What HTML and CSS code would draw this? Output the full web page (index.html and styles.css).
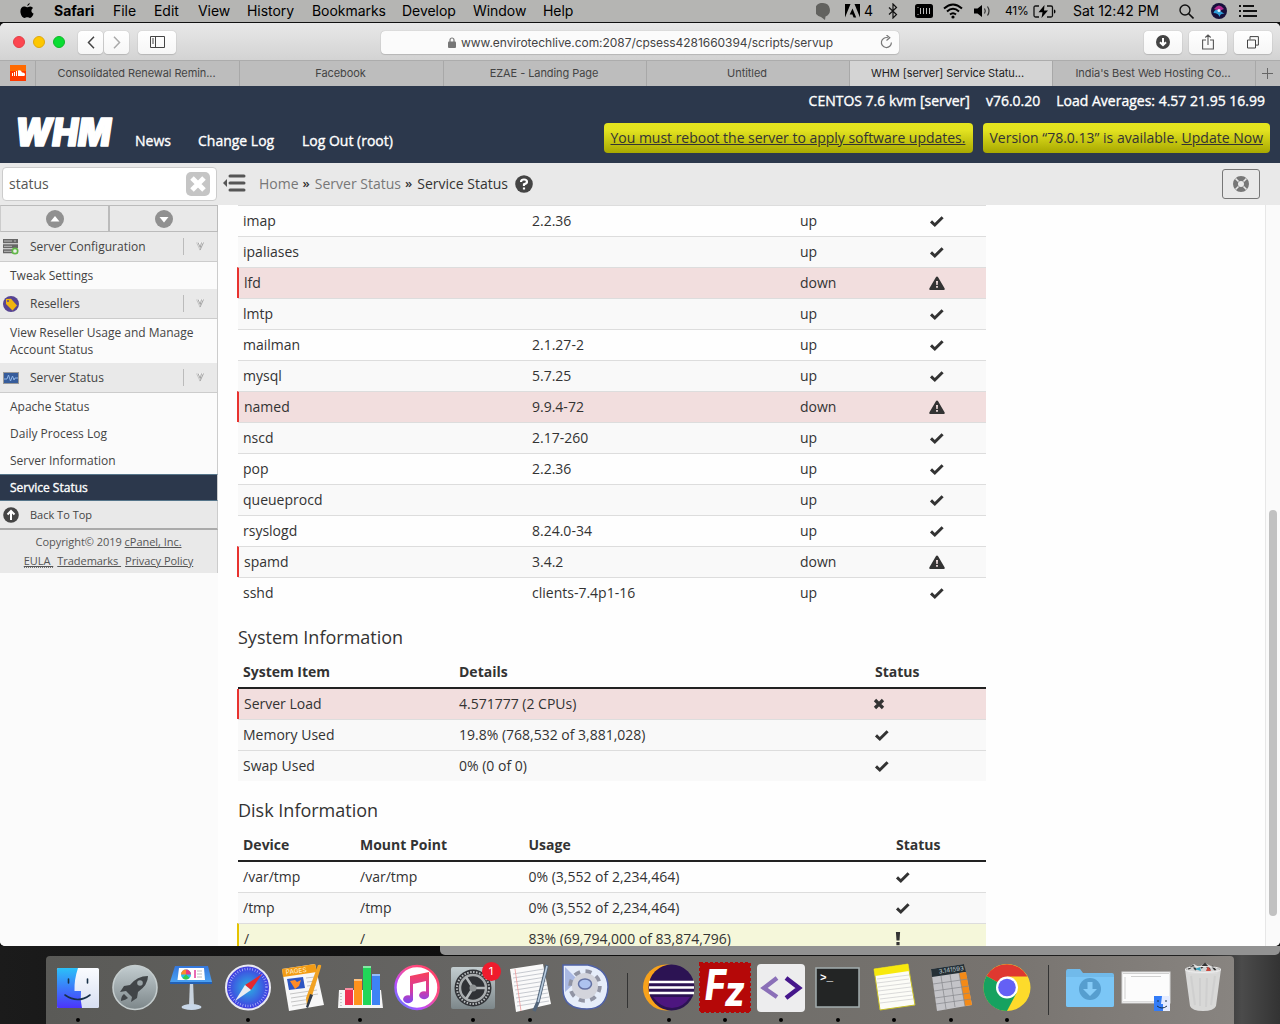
FILE: index.html
```html
<!DOCTYPE html>
<html lang="en">
<head>
<meta charset="utf-8">
<title>WHM [server] Service Status</title>
<link rel="stylesheet" href="styles.css">
</head>
<body>
<svg class="defs" width="0" height="0" aria-hidden="true">
  <symbol id="check" viewBox="0 0 16 14"><path d="M2 7.4 5.8 11 13.6 3.2" fill="none" stroke="#333" stroke-width="3"/></symbol>
  <symbol id="warn" viewBox="0 0 16 14"><path d="M8 .5Q8.7.5 9.100 1.200L15.700 12.500Q16 14 14.800 14H1.200Q0 14 .3 12.500L6.900 1.200Q7.300.5 8 .5Z" fill="#333"/><path d="M7 5h2l-.3 4H7.300ZM7.100 10h1.800v1.800H7.100Z" fill="#f2dede"/></symbol>
  <symbol id="cross" viewBox="0 0 16 14"><path d="M2 3 10 11M10 3 2 11" fill="none" stroke="#333" stroke-width="3.300"/></symbol>
  <symbol id="bang" viewBox="0 0 16 14"><path d="M.9 0h4.200l-.6 8.500h-3ZM1.400 10h3.200v3.200H1.400Z" fill="#333"/></symbol>
  <symbol id="chev" viewBox="0 0 8 9"><path d="M0 .5H8L4 9Z" fill="#f6f6f6"/><path d="M.5.5 4 8" fill="none" stroke="#c4c4c4"/><path d="M2 .5 4.200 5.500 5.500.5M4 8.200 7.500.5" fill="none" stroke="#a2a2a2"/></symbol>
  <linearGradient id="gray" x2="0" y2="1"><stop stop-color="#c3cdd0"/><stop offset="1" stop-color="#7d878a"/></linearGradient>
  <linearGradient id="blue" x2="0" y2="1"><stop stop-color="#2bc1f8"/><stop offset="1" stop-color="#4c34fb"/></linearGradient>
  <linearGradient id="pale" x2="0" y2="1"><stop stop-color="#fafcff"/><stop offset="1" stop-color="#d8dff2"/></linearGradient>
  <linearGradient id="kn" x2="0" y2="1"><stop stop-color="#3577dc"/><stop offset="1" stop-color="#4da6f5"/></linearGradient>
  <radialGradient id="compass"><stop stop-color="#2ab4e2"/><stop offset="1" stop-color="#4337e0"/></radialGradient>
  <linearGradient id="ring" x1="1" y1="0" x2="0" y2="1"><stop stop-color="#ff3b5c"/><stop offset=".4" stop-color="#ff4d8c"/><stop offset=".7" stop-color="#b64bff"/><stop offset="1" stop-color="#4a8bff"/></linearGradient>
  <linearGradient id="note" x2="0" y2="1"><stop stop-color="#fa4158"/><stop offset=".6" stop-color="#d33ba5"/><stop offset="1" stop-color="#7b48f7"/></linearGradient>
</svg>

<header class="menubar">
  <div class="menus">
    <span class="apple"><svg width="14" height="17" viewBox="0 0 14 17"><path d="M9.800.8Q9.900 3 7.200 4.300 7.200 1.800 9.800.8M7 5.200c1 0 1.800-.9 3.300-.8 1.300.1 2.200.7 2.700 1.500-2.300 1.600-2 4.700.6 5.700-.8 2.300-2 4.300-3.600 4.300-1 0-1.500-.6-2.700-.6s-1.800.6-2.700.6C2.300 15.900.4 12.300.4 9.200c0-3 1.800-4.700 3.700-4.700 1.200 0 2.100.7 2.900.7Z" fill="#000"/></svg></span>
    <b>Safari</b><span>File</span><span>Edit</span><span>View</span><span>History</span><span>Bookmarks</span><span>Develop</span><span>Window</span><span>Help</span>
  </div>
  <div class="tray">
    <svg class="t-bubble" width="14" height="17" viewBox="0 0 14 17"><path d="M7 0a7 7 0 0 1 2.500 13.500L9 17 5 14A7 7 0 0 1 7 0Z" fill="#62625f"/></svg>
    <svg class="t-adobe" width="15" height="14" viewBox="0 0 15 14"><path d="M0 0h5.500L0 13.500ZM9.500 0H15v13.500ZM7.500 4.500 11.200 13.500H8.600L7.400 10.500H4.700Z"/></svg><span class="t-four">4</span>
    <svg class="t-bt" width="10" height="16" viewBox="0 0 10 16"><path d="M1 4.500 8.500 11.500 5 15V1l3.500 3.500L1 11.500" fill="none" stroke="#111" stroke-width="1.200"/></svg>
    <svg class="t-mem" width="18" height="14" viewBox="0 0 18 14"><rect width="18" height="14" rx="2.500"/><path d="M2.500 3.500h1M2.500 10.500h1M5.500 4v6M8.500 4v6M11.500 4v6M14.500 4v6" fill="none" stroke="#bbb"/></svg>
    <svg class="t-wifi" width="20" height="16" viewBox="0 0 20 16"><path d="M1 5.500Q10-2.500 19 5.500M4 8.500Q10 3 16 8.500M7 11.500Q10 9 13 11.500" fill="none" stroke="#000" stroke-width="2"/><circle cx="10" cy="14" r="1.600"/></svg>
    <svg class="t-vol" width="18" height="14" viewBox="0 0 18 14"><path d="M0 4.500h3.500L8 1v12L3.500 9.500H0Z"/><path d="M10.500 4.500q1.600 2.500 0 5M13.500 2.500q3 4.500 0 9" fill="none" stroke="#333" stroke-width="1.200"/></svg>
    <span class="t-pct">41%</span>
    <svg class="t-bat" width="23" height="13" viewBox="0 0 23 13"><path d="M6 1H2.500Q1 1 1 2.500V10.500Q1 12 2.500 12H6M14 1h4q1.500 0 1.500 1.500v8Q19.500 12 18 12H14" fill="none" stroke="#111" stroke-width="1.300"/><path d="M21 4.500q1.500 0 1.500 2t-1.500 2ZM11.500 0 5.500 7.300H9.500L8.500 13 15 5.500H11Z"/></svg>
    <span class="t-clock">Sat 12:42 PM</span>
    <svg class="t-find" width="15" height="15" viewBox="0 0 15 15"><circle cx="6" cy="6" r="5" fill="none" stroke="#111" stroke-width="1.400"/><path d="m9.500 9.500 5 5" stroke="#111" stroke-width="1.600"/></svg>
    <svg class="t-siri" width="16" height="16" viewBox="0 0 16 16"><circle cx="8" cy="8" r="8" fill="#17103c"/><path d="M3 6Q8-1 13 6L8 8Z" fill="#b02a8e"/><path d="M2.500 10q1-4 5.500-3l5.500 4q-4-1-5 3-1-4-6-4Z" fill="#2f9ed8"/><circle cx="8" cy="7.500" r="1.500" fill="#e8f4ff"/></svg>
    <svg class="t-list" width="18" height="12" viewBox="0 0 18 12"><path d="M0 1h2M0 6h2M0 11h2M4 1h11M4 6h14M4 11h14" stroke="#111" stroke-width="2"/></svg>
  </div>
</header>

<div class="window">
  <div class="toolbar">
    <div class="lights"><i class="red"></i><i class="yellow"></i><i class="green"></i></div>
    <div class="nav">
      <span class="btn small"><svg width="8" height="13" viewBox="0 0 8 13"><path d="M7 .8 1.500 6.500 7 12.200" fill="none" stroke="#444" stroke-width="1.500"/></svg></span>
      <span class="btn small"><svg width="8" height="13" viewBox="0 0 8 13"><path d="M1 .8 6.500 6.500 1 12.200" fill="none" stroke="#aaa" stroke-width="1.500"/></svg></span>
    </div>
    <span class="btn side"><svg width="15" height="12" viewBox="0 0 15 12"><path d="M.5.5h14v11H.5ZM5.500.5v11M2 3h2M2 5h2M2 7h2" fill="none" stroke="#444"/></svg></span>
    <div class="url"><svg width="8" height="11" viewBox="0 0 8 11"><path d="M2 5V3a2 2 0 0 1 4 0v2" fill="none" stroke="#777" stroke-width="1.200"/><rect y="4.500" width="8" height="6.500" rx="1" fill="#777"/></svg><span>www.envirotechlive.com:2087/cpsess4281660394/scripts/servup</span>
      <svg class="reload" width="13" height="14" viewBox="0 0 13 14"><path d="M8 2.800A5 5 0 1 0 11.400 7.500" fill="none" stroke="#777" stroke-width="1.200"/><path d="M6.500 0 9.800 2.800 6.500 5.500" fill="none" stroke="#777" stroke-width="1.200"/></svg></div>
    <div class="actions">
      <span class="btn"><svg width="14" height="14" viewBox="0 0 14 14"><circle cx="7" cy="7" r="7" fill="#444"/><path d="M7 3v7M4 7.200l3 3 3-3" fill="none" stroke="#fff" stroke-width="2"/></svg></span>
      <span class="btn"><svg width="12" height="16" viewBox="0 0 12 16"><path d="M4 6H.6v9h10.800V6H8M6 11V1M3.300 3.500 6 .9l2.700 2.600" fill="none" stroke="#555" stroke-width="1.100"/></svg></span>
      <span class="btn"><svg width="12" height="13" viewBox="0 0 12 13"><path d="M.5 4h8v8h-8ZM3 3.500V.6h8.400v8.500H9" fill="none" stroke="#444"/></svg></span>
    </div>
  </div>
  <div class="tabs">
    <span class="pin"><svg width="16" height="16" viewBox="0 0 16 16"><rect width="16" height="16" fill="#ff3a00"/><rect width="16" height="6" fill="#ff6a00"/><path d="M2.500 8v3M4.500 7v4M6.500 6v5" stroke="#fff"/><path d="M8 5.500q3-1 4 2 3-.3 3 2 0 1.500-1.500 1.500H8Z" fill="#fff"/></svg></span>
    <span>Consolidated Renewal Remin...</span><span>Facebook</span><span>EZAE - Landing Page</span><span>Untitled</span><span class="active">WHM [server] Service Statu...</span><span>India's Best Web Hosting Co...</span>
    <span class="plus"><svg width="11" height="11" viewBox="0 0 11 11"><path d="M5.500 0v11M0 5.500h11" stroke="#666"/></svg></span>
  </div>

  <div class="whm">
    <svg class="logo" width="108" height="56" viewBox="0 0 108 56"><text x="2" y="42" textLength="96" lengthAdjust="spacingAndGlyphs">WHM</text></svg>
    <nav><a class="n1">News</a><a class="n2">Change Log</a><a>Log Out (root)</a></nav>
    <div class="info">
      <div class="stats"><span class="os">CENTOS 7.6 kvm [server]</span><span class="ver">v76.0.20</span><span>Load Averages: 4.57 21.95 16.99</span></div>
      <div class="notices"><span class="notice n-boot"><u>You must reboot the server to apply software updates.</u></span><span class="notice">Version “78.0.13” is available. <u>Update Now</u></span></div>
    </div>
  </div>

  <div class="subbar">
    <div class="search"><span>status</span><svg width="24" height="24" viewBox="0 0 24 24"><rect width="24" height="24" rx="5" fill="#c5c5c5"/><path d="m6 6 12 12M18 6 6 18" stroke="#fff" stroke-width="5"/></svg></div>
    <svg class="collapse" width="23" height="18" viewBox="0 0 23 18"><path d="M0 9 4 5v8Z" fill="#555"/><path d="M7 2h14M7 9h14M7 16h14" stroke="#555" stroke-width="3" stroke-linecap="round"/></svg>
    <div class="crumbs"><span>Home</span><b>»</b><span>Server Status</span><b>»</b><span class="here">Service Status</span><svg width="18" height="18" viewBox="0 0 18 18"><circle cx="9" cy="9" r="8.800" fill="#444"/><path d="M6 7Q6 4.500 9 4.500T12 7Q12 8.300 9 9.300V11M9 12.500v2" fill="none" stroke="#fff" stroke-width="2.200"/></svg></div>
    <span class="support"><svg width="16" height="16" viewBox="0 0 16 16"><circle cx="8" cy="8" r="5.500" fill="none" stroke="#777" stroke-width="5"/><path d="m2.500 2.500 3 3M13.500 2.500l-3 3M2.500 13.500l3-3M13.500 13.500l-3-3" stroke="#e9e9e9" stroke-width="1.500"/></svg></span>
  </div>

  <div class="page">
    <aside>
      <div class="jump"><span><svg width="18" height="18" viewBox="0 0 18 18"><circle cx="9" cy="9" r="9" fill="#909090"/><path d="M4.500 11.500 9 6l4.500 5.500Z" fill="#fff"/></svg></span><span><svg width="18" height="18" viewBox="0 0 18 18"><circle cx="9" cy="9" r="9" fill="#909090"/><path d="M4.500 7 9 12.500 13.500 7Z" fill="#fff"/></svg></span></div>
      <div class="group"><svg width="16" height="16" viewBox="0 0 16 16"><path d="M0 0h15v4.300H0ZM0 5.300h15v4H0ZM0 10.300h15v4H0Z" fill="#666"/><path d="M1 2h8M1 7.300h8M1 12.300h8M11 2h2" stroke="#bbb"/><circle cx="12" cy="12" r="2.700" fill="#eee" stroke="#62b848" stroke-width="1.700"/></svg><span>Server Configuration</span><i></i><svg class="chev" width="8" height="9"><use href="#chev"/></svg></div>
      <div class="item">Tweak Settings</div>
      <div class="group"><svg width="16" height="16" viewBox="0 0 16 16"><circle cx="8" cy="8" r="8" fill="#574492"/><path d="m3 3 5-.3 6 6.800-4.500 5L3 8Z" fill="#f1b40f"/><circle cx="5" cy="5" r="1" fill="#574492"/></svg><span>Resellers</span><i></i><svg class="chev" width="8" height="9"><use href="#chev"/></svg></div>
      <div class="item two">View Reseller Usage and Manage<br>Account Status</div>
      <div class="group"><svg width="16" height="16" viewBox="0 0 16 16"><rect x=".5" y="2.500" width="15" height="11" fill="#365c9b" stroke="#999"/><path d="M1 9h3l1.500-4 2 6 2-5 1.500 4 1-2h3" fill="none" stroke="#8fb6e8"/></svg><span>Server Status</span><i></i><svg class="chev" width="8" height="9"><use href="#chev"/></svg></div>
      <div class="item">Apache Status</div><div class="item">Daily Process Log</div><div class="item">Server Information</div><div class="item current">Service Status</div>
      <div class="top"><svg width="16" height="16" viewBox="0 0 16 16"><circle cx="8" cy="8" r="7.800" fill="#444"/><path d="M8 13V5M4.500 7.500 8 4l3.500 3.500" fill="none" stroke="#fff" stroke-width="2"/></svg><span>Back To Top</span></div>
      <footer><div>Copyright© 2019 <u>cPanel, Inc.</u></div><div class="legal"><u class="eula">EULA&nbsp;</u><u>Trademarks&nbsp;</u><u>Privacy Policy</u></div></footer>
    </aside>
    <main>
      <div class="rows services">
        <div><span>imap</span><span>2.2.36</span><span>up</span><svg><use href="#check"/></svg></div>
        <div><span>ipaliases</span><span></span><span>up</span><svg><use href="#check"/></svg></div>
        <div class="bad"><span>lfd</span><span></span><span>down</span><svg><use href="#warn"/></svg></div>
        <div><span>lmtp</span><span></span><span>up</span><svg><use href="#check"/></svg></div>
        <div><span>mailman</span><span>2.1.27-2</span><span>up</span><svg><use href="#check"/></svg></div>
        <div><span>mysql</span><span>5.7.25</span><span>up</span><svg><use href="#check"/></svg></div>
        <div class="bad"><span>named</span><span>9.9.4-72</span><span>down</span><svg><use href="#warn"/></svg></div>
        <div><span>nscd</span><span>2.17-260</span><span>up</span><svg><use href="#check"/></svg></div>
        <div><span>pop</span><span>2.2.36</span><span>up</span><svg><use href="#check"/></svg></div>
        <div><span>queueprocd</span><span></span><span>up</span><svg><use href="#check"/></svg></div>
        <div><span>rsyslogd</span><span>8.24.0-34</span><span>up</span><svg><use href="#check"/></svg></div>
        <div class="bad"><span>spamd</span><span>3.4.2</span><span>down</span><svg><use href="#warn"/></svg></div>
        <div><span>sshd</span><span>clients-7.4p1-16</span><span>up</span><svg><use href="#check"/></svg></div>
      </div>
      <h2>System Information</h2>
      <div class="head system"><span>System Item</span><span>Details</span><span>Status</span></div>
      <div class="rows system">
        <div class="bad"><span>Server Load</span><span>4.571777 (2 CPUs)</span><svg><use href="#cross"/></svg></div>
        <div class="plain"><span>Memory Used</span><span>19.8% (768,532 of 3,881,028)</span><svg><use href="#check"/></svg></div>
        <div class="shade"><span>Swap Used</span><span>0% (0 of 0)</span><svg><use href="#check"/></svg></div>
      </div>
      <h2>Disk Information</h2>
      <div class="head disk"><span>Device</span><span>Mount Point</span><span>Usage</span><span>Status</span></div>
      <div class="rows disk">
        <div><span>/var/tmp</span><span>/var/tmp</span><span>0% (3,552 of 2,234,464)</span><svg><use href="#check"/></svg></div>
        <div><span>/tmp</span><span>/tmp</span><span>0% (3,552 of 2,234,464)</span><svg><use href="#check"/></svg></div>
        <div class="caution"><span>/</span><span>/</span><span>83% (69,794,000 of 83,874,796)</span><svg><use href="#bang"/></svg></div>
      </div>
    </main>
    <div class="scroll"><i></i></div>
  </div>
</div>

<div class="desktop">
  <div class="behind"></div>
  <div class="dock">
    <span class="app on"><svg viewBox="0 0 56 56"><rect x="7" y="8" width="42" height="40" rx="1.500" fill="url(#pale)"/><path d="M8.500 8H28Q24 20 24.500 31H31Q30 40 32 48H8.500Q7 48 7 46.500V9.500Q7 8 8.500 8Z" fill="url(#blue)"/><path d="M18.500 19v4M37.500 19v4M15 35Q28 44 40 35" fill="none" stroke="#173048" stroke-width="1.600" stroke-linecap="round"/></svg></span>
    <span class="app"><svg viewBox="0 0 56 56"><circle cx="28" cy="27.500" r="22" fill="url(#gray)" stroke="#c4cccd" stroke-width="1.600"/><path d="M41 16Q30 16 23 25L17 26 13 32 19 31 25 37 24 42 30 38 31 32Q41 25 41 16ZM17 34q-3 2-3 7 5-1 7-3Z" fill="#414548"/><circle cx="33" cy="23" r="2.800" fill="#9aa4a7"/></svg></span>
    <span class="app"><svg viewBox="0 0 56 56"><path d="M27 20h3l1 26h-5Z" fill="#c9d3de"/><ellipse cx="28.500" cy="47" rx="10" ry="3" fill="#c8d7e8"/><path d="M12 6H45L49 22v2H7v-2Z" fill="url(#kn)"/><path d="M7 22h42v2H7Z" fill="#2360b5"/><path d="M16 8h25l1 12H14.500Z" fill="#fff"/><circle cx="23" cy="14.500" r="5" fill="#27c0ef"/><path d="M23 14.500V9.500a5 5 0 0 0-5 5Z" fill="#ff8a2a"/><path d="M23 14.500h5a5 5 0 0 0-5-5Z" fill="#e93b80"/><path d="M23 14.500l3.500 3.500q-4 3-7 0Z" fill="#35cb4b"/><path d="M31 10h2v8h-2" fill="#e86ab4"/><path d="M34 11h5M34 14h5M34 17h5" stroke="#bbb"/></svg></span>
    <span class="app on"><svg viewBox="0 0 56 56"><circle cx="28" cy="27.500" r="22" fill="url(#compass)" stroke="#e9e9f1" stroke-width="2"/><circle cx="28" cy="27.500" r="18.500" fill="none" stroke="#c5c8ff" stroke-width="2.500" stroke-dasharray=".6 2"/><path d="M42 14 31 30 25 25Z" fill="#e6282f"/><path d="M15 41 25 25l6 5Z" fill="#e9edf2"/></svg></span>
    <span class="app"><svg viewBox="0 0 56 56"><path d="M6 9 39 4 48 45 13 51Z" fill="#f7f7f7"/><path d="M6 9 39 4 41 12 7 17Z" fill="#f39c15"/><text x="10" y="14.500" font-size="6.500" transform="rotate(-7 10 14)" fill="#fff4d8">PAGES</text><path d="M11 19 27 17l2 11-16 2Z" fill="#2d55c3"/><path d="m14 21 5-1 2 2 4-2-2 6-4 3Z" fill="#ff8b25"/><path d="m30 18 9-1M31 22l9-1M31 26l9-1M14 34l27-4M15 38l27-4M15 42l20-3M16 46l18-3" stroke="#c5c5c5"/><path d="M42 5q4-1 3 2L35 39l-4 7-1-8Z" fill="#f2a323"/><path d="M34 34l3 1-5 13-2-1Z" fill="#303a48"/></svg></span>
    <span class="app on"><svg viewBox="0 0 56 56"><path d="M7 30H49l2 18H6Z" fill="#f4f4f4"/><path d="M9 33v13" stroke="#999" stroke-dasharray="1 2"/><rect x="13" y="28" width="8" height="17" fill="#f03054"/><rect x="22" y="19" width="8" height="26" fill="#ff921d"/><rect x="31" y="6" width="8" height="39" fill="#20d658"/><rect x="40" y="14" width="8" height="31" fill="#3d83f5"/><path d="M13 28h8v2h-8ZM22 19h8v2h-8ZM31 6h8v2h-8ZM40 14h8v2h-8Z" fill="#fff" opacity=".45"/></svg></span>
    <span class="app"><svg viewBox="0 0 56 56"><circle cx="28" cy="27.500" r="21.500" fill="#fff" stroke="url(#ring)" stroke-width="2.500"/><path d="M21 16 40 12V36A5 4 0 1 1 37 31.500V21L24 24V40A5 4 0 1 1 21 35.500Z" fill="url(#note)"/></svg></span>
    <span class="app on"><svg viewBox="0 0 56 56"><rect x="6" y="7" width="44" height="42" rx="2" fill="url(#gray)"/><circle cx="28" cy="28" r="18.500" fill="#303236"/><circle cx="28" cy="28" r="13" fill="none" stroke="#a8acae" stroke-width="2.500"/><circle cx="28" cy="28" r="16" fill="none" stroke="#b9bdbf" stroke-width="2" stroke-dasharray="1.500 1.500"/><path d="M28 28H41M28 28 21 17M28 28 21 39" stroke="#b4b8ba" stroke-width="2.500"/><circle cx="28" cy="28" r="3.500" fill="#8e9294"/></svg><em>1</em></span>
    <span class="app on"><svg viewBox="0 0 56 56"><path d="M8 9 41 4 49 44 14 52Z" fill="#fafafa"/><path d="m11 14 31-5M11 18l32-5M12 22l32-5M12 26l32-5M13 30l32-5M14 34l32-5M14 38l32-5M15 42l32-5M15 46l32-5" stroke="#b9bcc4" stroke-width=".8"/><path d="m13 9 6 42" stroke="#ef9a9a" stroke-width=".8"/><path d="M45 5 36 42l-4 9" fill="none" stroke="#53657a" stroke-width="3.500"/><path d="M45 6 36 42" stroke="#b9ccdf" stroke-width="1.500"/></svg></span>
    <span class="app"><svg viewBox="0 0 56 56"><path d="M5 5H30Q50 9 50 27 49 49 29 49 5 49 5 29Z" fill="#e6edfa" stroke="#4f61a6" stroke-width="1.500"/><path d="M7 7 20 20 7 32Z" fill="#a9b8e3"/><circle cx="27" cy="26" r="14.500" fill="none" stroke="#9194a4" stroke-width="4.500" stroke-dasharray="6 5.400"/><circle cx="27" cy="26" r="13" fill="#d3d4dc"/><ellipse cx="27" cy="24" rx="6.500" ry="5" fill="#adc3ef" stroke="#6472a4" stroke-width="1.500"/></svg></span>
    <span class="sep"></span>
    <span class="app on"><svg viewBox="0 0 56 56"><circle cx="25" cy="27.500" r="23" fill="#f8a21b"/><circle cx="30.500" cy="27.500" r="23" fill="#2c1353"/><path d="M12 37h37q-7 11-18 11T12 37" fill="#4d167f"/><path d="M8 22h45M8 27.500h45M8 33h45" stroke="#fff" stroke-width="2.500"/></svg></span>
    <span class="app on"><svg viewBox="0 0 56 56"><rect x="3" y="3" width="50" height="49" fill="#b50808" stroke="#b50808" stroke-width="2" stroke-dasharray="3 2"/><text x="8" y="40" font-size="42" font-weight="800" font-style="italic" fill="#fff" textLength="40" lengthAdjust="spacingAndGlyphs">F<tspan dy="6">z</tspan></text></svg></span>
    <span class="app on"><svg viewBox="0 0 56 56"><rect x="4" y="4" width="48" height="48" rx="4" fill="#ededee"/><path d="M24 18 11 28l13 9" fill="none" stroke="#8b70b8" stroke-width="4.500"/><path d="M33 18 46 28 33 38" fill="none" stroke="#45168b" stroke-width="4.500"/></svg></span>
    <span class="app on"><svg viewBox="0 0 56 56"><rect x="6" y="8" width="43" height="39" fill="#232525" stroke="#a3adae" stroke-width="1.500"/><text x="10" y="21" font-size="11" font-weight="700" fill="#fff" font-family="Liberation Mono, monospace">&gt;_</text></svg></span>
    <span class="app on"><svg viewBox="0 0 56 56"><path d="M8 9 42 4 49 45 14 50Z" fill="#fcfcf7" stroke="#c7c027"/><path d="M8 9 42 4l1 7L9 16Z" fill="#f8e90d"/><path d="m11 19 32-4M11 23l32-4M12 27l32-4M12 31l33-4M13 35l33-4M14 39l33-4M14 43l33-4" stroke="#d2d2d2" stroke-width=".8"/></svg></span>
    <span class="app on"><svg viewBox="0 0 56 56"><path d="M8 9 41 4 49 45 14 51Z" fill="#c4c4c8"/><path d="M8 9 41 4 43 12 9 17Z" fill="#263036"/><path d="m36 13 7-1 6 33-7 1Z" fill="#f48a17"/><path d="m10 24 35-5M11 31l35-5M12 38l35-5M13 44l35-5M18 16l5 33M27 14l5 33M36 13l6 33" stroke="#85868b" stroke-width=".7"/><text x="16" y="13.500" transform="rotate(-8 17 13)" font-size="6.200" fill="#b8c5ca">3.141593</text></svg></span>
    <span class="app on"><svg viewBox="0 0 56 56"><circle cx="28" cy="27.500" r="23.500" fill="#fddb2b"/><path d="M28 27.500 7.500 16A23.500 23.500 0 0 1 48.500 16.500H28Z" fill="#df3830"/><path d="M28 27.500 7.500 16A23.500 23.500 0 0 0 28 51L37.500 33Z" fill="#16a260"/><circle cx="28" cy="27.500" r="11" fill="#fff"/><circle cx="28" cy="27.500" r="8.800" fill="#6460f5"/></svg></span>
    <span class="sep long"></span>
    <span class="app"><svg viewBox="0 0 56 56"><path d="M4 12q0-3 2-3H18l3 4H50q2 0 2 2V45q0 2-2 2H6q-2 0-2-2Z" fill="#71baea"/><path d="M4 17H52V45q0 2-2 2H6q-2 0-2-2Z" fill="#7bc6f6"/><circle cx="28" cy="29" r="11" fill="#569ecf"/><path d="M25.500 22h5v7H35l-7 7-7-7h4.500Z" fill="#86ccf8"/></svg></span>
    <span class="app"><svg viewBox="0 0 56 56"><rect x="4" y="12" width="48" height="31" fill="#fcfcfc" stroke="#d6d6d6"/><path d="M5 13.500h46M13 16.500h30M7 17v22" stroke="#d0d0d0"/><path d="M5 41.500h46" stroke="#ddd"/><rect x="36" y="36" width="16" height="15" fill="#e5ecff"/><path d="M36 36h8l-1 8h2v7H36Z" fill="#337cf7"/><path d="M40 40v2M48 40v2M39 46q5 4 10 0" fill="none" stroke="#173048"/></svg></span>
    <span class="app"><svg viewBox="0 0 56 56"><path d="m12 8 7-4 5 3 6-4 6 3 8 3-2 5H13Z" fill="#d4d4d4"/><path d="m13 9 5-3 3 4M26 8l4-4 5 6M37 6l4 5" fill="none" stroke="#333" stroke-width="2"/><path d="m20 9 5-2 1 4Z" fill="#32a6c4"/><path d="m33 6 3 5h-5Z" fill="#cb463c"/><path d="M10 9Q28 14 46 9L41 46Q39 51 28 51T15 46Z" fill="#dcdcdc" opacity=".95"/><path d="M16 16l4 29M25 18v28M32 18l-1 29M40 16l-4 29" stroke="#c8c8c8" stroke-width="2" opacity=".5"/><ellipse cx="28" cy="9.500" rx="18" ry="3" fill="none" stroke="#eee"/></svg></span>
  </div>
</div>
</body>
</html>
```
FILE: styles.css
```css
* { box-sizing: border-box; }
body { margin: 0; width: 1280px; height: 1024px; overflow: hidden; background: #111; font-family: "Open Sans", sans-serif; font-size: 14px; color: #333; white-space: nowrap; display: flex; flex-direction: column; }
svg { display: block; flex: none; }
.defs { position: absolute; }

.menubar { height: 23px; flex: none; background: #b5b5b3; border-bottom: 1px solid #111; display: flex; justify-content: space-between; font: 14px/22px Inter, sans-serif; color: #000; }
.menus { display: grid; grid-template-columns: 54px 59px 41px 44px 49px 65px 90px 71px 70px 60px; }
.menus > span, .t-clock { letter-spacing: -.05px; }
.apple { padding: 2px 0 0 20px; }
.tray { display: flex; align-items: center; width: 464px; }
.t-adobe { margin-left: 15px; }
.t-four { margin-left: 4px; width: 11px; }
.t-bt { margin-left: 13px; }
.t-mem { margin-left: 17px; }
.t-wifi { margin-left: 10px; }
.t-vol { margin-left: 11px; }
.t-pct { margin-left: 13px; width: 28px; font-size: 12px; letter-spacing: -.2px; }
.t-clock { margin-left: 17px; width: 106px; }
.t-siri { margin-left: 17px; }
.t-list { margin-left: 12px; }

.window { height: 923px; flex: none; display: flex; flex-direction: column; border-radius: 5px; overflow: hidden; background: #fefefe; }
.toolbar { height: 38px; flex: none; display: flex; align-items: center; background: linear-gradient(#e8e8e8, #d3d3d3); border-bottom: 1px solid #acacac; padding: 1px 8px 0 13px; }
.lights { display: flex; gap: 8px; margin-right: 13px; }
.lights i { width: 12px; height: 12px; border-radius: 50%; }
.red { background: #fc4650; border: 1px solid #e33e45; }
.yellow { background: #fdc700; border: 1px solid #dfa80c; }
.green { background: #09dd32; border: 1px solid #10b729; }
.nav { display: flex; gap: 1px; }
.btn { width: 38px; height: 23px; background: linear-gradient(#fff, #f6f6f6); border-radius: 4px; box-shadow: 0 0 1px #999, 0 1px 1px #bbb; display: flex; align-items: center; justify-content: center; }
.btn.small { width: 25px; }
.side { margin-left: 9px; }
.url { margin-left: 205px; width: 518px; height: 23px; border-radius: 4px; background: #fbfbfb; box-shadow: 0 0 1px #999, 0 1px 1px #bbb; display: flex; align-items: center; padding: 0 6px 0 67px; font: 12px Inter, sans-serif; color: #444; gap: 5px; letter-spacing: -.05px; }
.reload { margin-left: auto; }
.actions { margin-left: auto; display: flex; gap: 7px; }
.tabs { height: 25px; flex: none; display: grid; grid-template-columns: 35px 204px 204px 203px 203px 203px 203px 25px; background: #bdbdbd; font: 11px/24px Inter, sans-serif; color: #444; text-align: center; letter-spacing: -.07px; }
.tabs span { border-left: 1px solid #a8a8a8; border-bottom: 1px solid #aaa; padding-right: 2px; }
.tabs .pin { border-left: 0; padding: 4px 10px; }
.tabs .active { background: #d4d4d4; color: #222; padding-right: 7px; }
.tabs .plus { padding: 7px 6px; }

.whm { height: 77px; flex: none; background: #2c384c; color: #fff; display: flex; align-items: flex-start; padding-right: 10px; }
.logo { margin: 18px 0 0 13px; fill: #fff; stroke: #fff; stroke-width: 1.6px; stroke-linejoin: round; font: italic 900 38px Inter, sans-serif; }
nav { margin: 45px 0 0 14px; line-height: 20px; display: flex; }
nav, .stats, .item.current { -webkit-text-stroke: .35px #fff; }
.n1 { width: 63px; }
.n2 { width: 104px; }
.info { margin-left: auto; display: flex; flex-direction: column; align-items: flex-end; }
.stats { display: flex; gap: 16px; line-height: 20px; padding: 5px 5px 0 0; margin-bottom: 12px; }
.notices { display: flex; gap: 10px; }
.notice { height: 30px; line-height: 30px; padding: 0 7px; color: #333; border-radius: 4px; background: linear-gradient(#e5e51d, #e2e220 25%, #a8a800); }
.n-boot { width: 369px; letter-spacing: -.02px; }

.subbar { height: 42px; flex: none; background: #e9e9e9; display: flex; align-items: center; padding-right: 20px; }
.search { width: 215px; height: 34px; margin-left: 2px; border: 1px solid #ccc; border-radius: 4px; background: #fff; display: flex; align-items: center; justify-content: space-between; padding: 0 6px; color: #555; }
.search span { padding-bottom: 2px; }
.collapse { margin: 0 0 2px 6px; }
.crumbs { display: flex; align-items: center; margin: 0 0 2px 13px; color: #777; }
.crumbs b { color: #333; font-weight: 600; font-size: 13px; margin: 0 5px 0 4px; }
.crumbs .here { color: #333; }
.crumbs svg { margin: 2px 0 0 7px; }
.support { margin-left: auto; width: 38px; height: 30px; border: 1px solid #777; border-radius: 3px; display: flex; align-items: center; justify-content: center; }

.page { flex: 1; min-height: 0; display: flex; }
aside { width: 218px; background: #fbfbfb; font-size: 12px; color: #444; }
.jump { height: 27px; display: flex; border: 1px solid #bbb; border-left-color: #ccc; background: #e9e9e9; }
.jump span { flex: 1; display: flex; align-items: center; justify-content: center; }
.jump span + span { border-left: 2px solid #bbb; }
.group { height: 30px; background: #e9e9e9; border-bottom: 1px solid #ccc; border-right: 1px solid #ccc; padding: 0 13px 0 3px; display: flex; align-items: center; }
.group span { margin-left: 11px; }
.group i { margin-left: auto; width: 1px; height: 17px; background: #bbb; margin-right: 12px; }
.item { height: 27px; line-height: 27px; padding-left: 10px; border-right: 1px solid #ccc; }
.item.two { height: 44px; line-height: 17px; padding-top: 5px; }
.item.current { background: #2c384c; color: #fff; border-top: 1px solid #56758a; border-bottom: 1px solid #56758a; line-height: 25px; }
.top { height: 29px; background: #e9e9e9; display: flex; align-items: center; padding-left: 3px; gap: 11px; border-bottom: 2px solid #aaa; border-right: 1px solid #ccc; font-size: 11px; }
footer { background: #e9e9e9; height: 43px; text-align: center; font-size: 11px; letter-spacing: -.04px; line-height: 19px; padding-top: 2px; border-right: 1px solid #ccc; color: #555; }
.legal { display: flex; justify-content: center; gap: 4px; }
.eula { border-bottom: 1px dotted #777; height: 17px; }

main { margin-left: 20px; width: 748px; }
.rows > div, .head { display: grid; padding-left: 5px; }
.rows > div { height: 31px; line-height: 30px; border-top: 1px solid #ddd; }
.rows > div:nth-child(even) { background: #f9f9f9; }
.rows svg { width: 16px; height: 14px; align-self: center; margin-bottom: 1px; }
.services > div { grid-template-columns: 289px 268px 129px 16px; }
.services > .bad { grid-template-columns: 288px 268px 129px 16px; }
.rows > .bad, .rows > .caution { margin-left: -1px; border-left: 2px solid #e8322f; background: #f2dede; }
.rows > .caution { border-left-color: #e5c300; background: #f5f7da; }
.rows > .plain { background: #fff; }
.rows > .shade { background: #f9f9f9; }
.system > div, .head.system { grid-template-columns: 216px 416px 60px; }
.system > .bad { grid-template-columns: 215px 415px 60px; }
.system svg, .disk svg { margin-left: -1px; }
.disk > div, .head.disk { grid-template-columns: 117px 168.500px 367.500px 60px; }
.disk > .caution { grid-template-columns: 116px 168.500px 367.500px 60px; }
h2 { margin: 0; font-size: 18px; font-weight: 400; line-height: 24px; padding-top: 17px; height: 48px; }
.head { font-weight: 700; height: 33px; line-height: 32px; border-bottom: 2px solid #222; }
.head + .rows > div:first-child { border-top: 0; height: 30px; }
.scroll { margin-left: auto; width: 15px; border-left: 1px solid #e7e7e7; background: #fafafa; padding: 305px 3px 0 3px; }
.scroll i { display: block; width: 8px; height: 406px; border-radius: 4px; background: #c1c1c1; }

.desktop { height: 78px; flex: none; background: linear-gradient(90deg, #1b1b1b, #0c0c0c 40%, #222 94%, #4b4b4b 97%, #333); display: flex; flex-direction: column; }
.behind { height: 9px; width: 840px; margin-left: 440px; background: #929292; border-radius: 0 0 5px 5px; }
.dock { margin: 1px 0 0 46px; width: 1188px; height: 68px; padding: 4px 0 0 4px; border-radius: 4px 4px 0 0; background: linear-gradient(90deg, #5a5a57, #666563 35%, #706e6a 60%, #77736f 80%, #888480); display: flex; }
.app { width: 56.450px; flex: none; position: relative; display: flex; flex-direction: column; align-items: center; font-family: Inter, sans-serif; }
.app svg { width: 56px; height: 56px; }
.app.on::after { content: ""; width: 4px; height: 4px; border-radius: 50%; background: #000; margin-top: 2px; }
.app em { position: absolute; top: 2px; right: 1px; width: 19px; height: 19px; border-radius: 50%; background: #ef1b2d; color: #fff; font: 11px/19px Inter, sans-serif; text-align: center; }
.sep { width: 26px; flex: none; display: flex; justify-content: center; }
.sep::before { content: ""; width: 1px; height: 35px; margin-top: 13px; background: #333; }
.sep.long::before { height: 50px; margin-top: 5px; }
```
